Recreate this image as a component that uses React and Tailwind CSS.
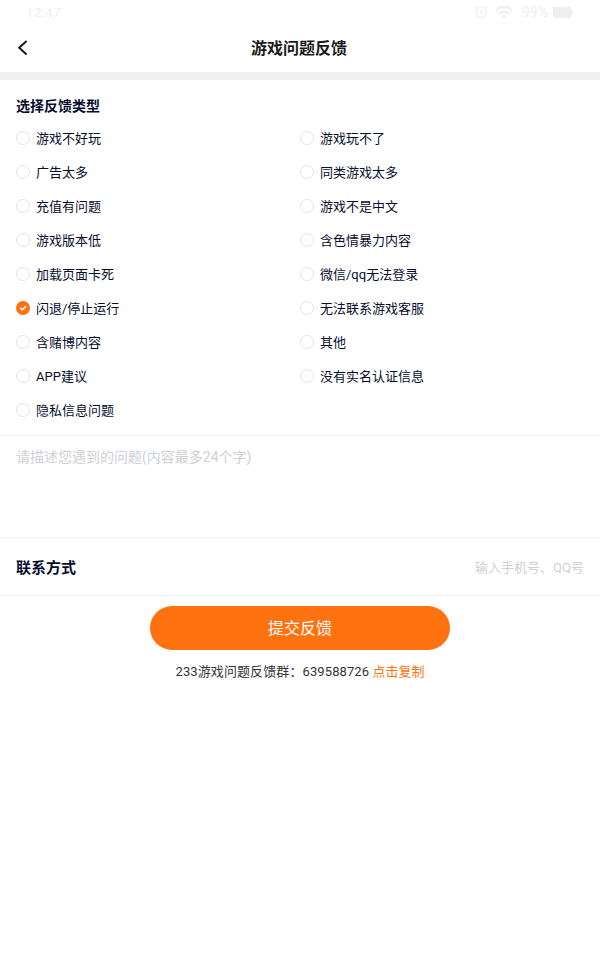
const options = [
  '游戏不好玩', '游戏玩不了',
  '广告太多', '同类游戏太多',
  '充值有问题', '游戏不是中文',
  '游戏版本低', '含色情暴力内容',
  '加载页面卡死', '微信/qq无法登录',
  '闪退/停止运行', '无法联系游戏客服',
  '含赌博内容', '其他',
  'APP建议', '没有实名认证信息',
  '隐私信息问题',
];
const selected = '闪退/停止运行';

function StatusBar() {
  return (
    <div className="flex h-6 items-center justify-between pl-[26px] pr-[27px] text-[#efefef]">
      <span className="text-[13.5px] leading-6 tracking-[0.3px]">12:47</span>
      <div className="flex items-center">
        <svg className="mr-[7px] h-[14px] w-[14px]" viewBox="0 0 14 14" fill="none" stroke="currentColor" strokeWidth="1.3">
          <circle cx="7" cy="7.5" r="5.2" />
          <path d="M7 4.5v3.3l2.2 1.4M.8 3.2 3.5.9M13.2 3.2 10.5.9" />
        </svg>
        <svg className="mr-[9px] h-[14px] w-[18px]" viewBox="0 0 18 14" fill="none" stroke="currentColor" strokeWidth="2.6">
          <path d="M.8 5.2a11.8 11.8 0 0 1 16.4 0M4 8.8a7.2 7.2 0 0 1 10 0" />
          <path d="M9 13 6.4 10.8a3.8 3.8 0 0 1 5.2 0z" fill="currentColor" stroke="none" />
        </svg>
        <span className="mr-[5px] text-[14px] leading-6">99%</span>
        <svg className="h-[11px] w-[20px]" viewBox="0 0 20 11" fill="currentColor">
          <rect width="18" height="11" rx="1" />
          <rect x="18" y="3" width="2" height="5" />
        </svg>
      </div>
    </div>
  );
}

function Radio({ checked }) {
  if (!checked) return <span className="h-[14px] w-[14px] shrink-0 rounded-full border border-[#e4e4e4]" />;
  return (
    <svg className="h-[14px] w-[14px] shrink-0" viewBox="0 0 14 14" fill="none">
      <circle cx="7" cy="7" r="7" fill="#ff7210" />
      <path d="M4.2 6.8 6.2 8.7l3.7-3.5" stroke="#fff" strokeWidth="1.5" />
    </svg>
  );
}

export default function App() {
  return (
    <div className="h-[960px] w-[600px] overflow-hidden bg-white font-[Roboto,'Noto_Sans_CJK_SC',sans-serif] text-[#080d2d]">
      <StatusBar />
      <header className="grid h-12 grid-cols-[60px_1fr_60px] items-center text-[#1a1a1a]">
        <svg className="ml-[17px] h-4 w-3" viewBox="0 0 12 16" fill="none" stroke="currentColor" strokeWidth="2">
          <path d="M9.6 1 2.2 7.7l7.4 6.8" />
        </svg>
        <h1 className="pr-[2px] pt-[2px] text-center text-base font-bold leading-6">游戏问题反馈</h1>
      </header>
      <div className="h-2 bg-[#f0f0f0]" />
      <section className="h-[356px] border-b border-[#efefef] px-4 pt-4">
        <h2 className="h-[25px] text-sm font-bold leading-[20px]">选择反馈类型</h2>
        <div className="grid grid-cols-2">
          {options.map((label) => (
            <label key={label} className="flex h-[34px] items-center gap-1.5 text-[13px]">
              <Radio checked={label === selected} />
              <span className="pt-px">{label}</span>
            </label>
          ))}
        </div>
      </section>
      <div className="h-[102px] border-b border-[#efefef] px-4 pt-[11px] text-sm leading-5 text-[#cfd0d6]">
        请描述您遇到的问题(内容最多24个字)
      </div>
      <div className="flex h-[58px] items-center justify-between border-b border-[#efefef] px-4">
        <h2 className="pt-[3px] text-[15px] font-bold">联系方式</h2>
        <span className="pt-[2px] text-[13px] text-[#cfd0d6]">输入手机号、QQ号</span>
      </div>
      <div className="flex flex-col items-center pt-[10px]">
        <button className="h-11 w-[300px] rounded-full bg-[#ff7210] pt-[2px] text-base text-white">提交反馈</button>
        <p className="mt-[12px] text-[13px] leading-5 text-[#333]">
          <span className="tracking-[0.1px]">233游戏问题反馈群：639588726 </span>
          <span className="text-[#ff7210]">点击复制</span>
        </p>
      </div>
    </div>
  );
}
